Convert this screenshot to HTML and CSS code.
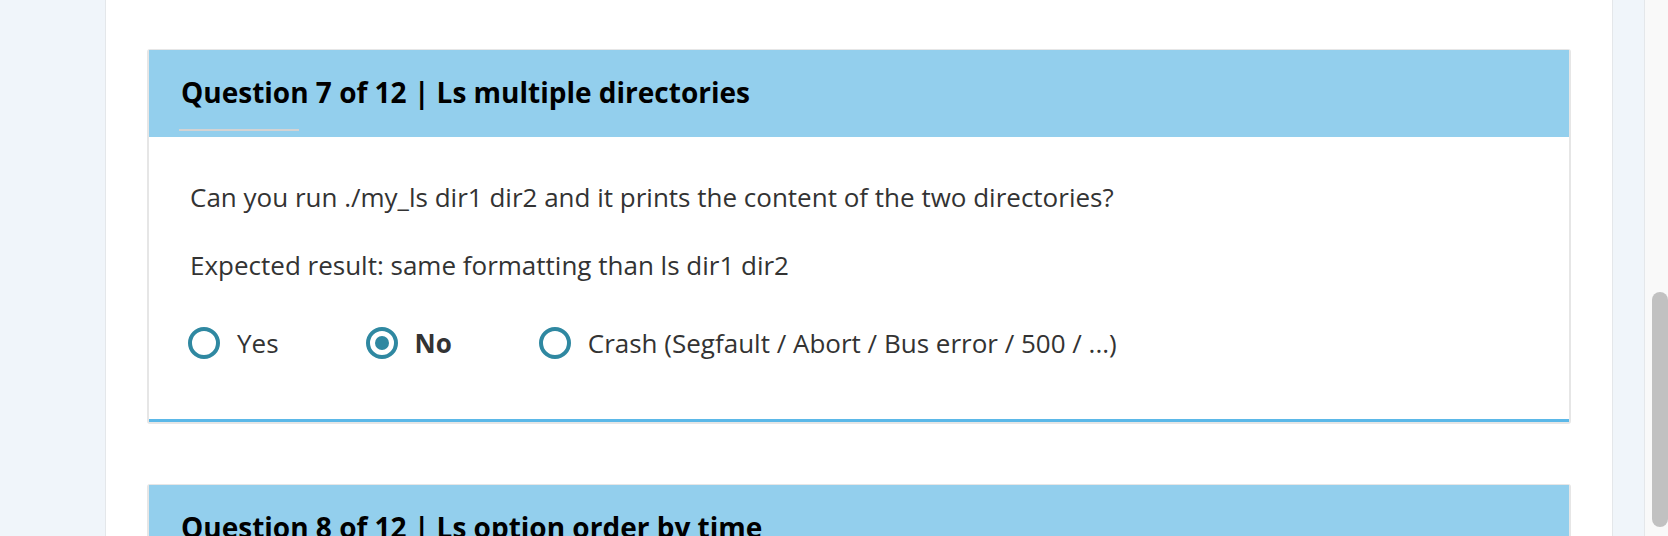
FILE: index.html
```html
<!DOCTYPE html>
<html lang="en">
<head>
<meta charset="utf-8">
<title>Evaluation</title>
<link rel="stylesheet" href="styles.css">
</head>
<body>
<div class="page">
  <aside class="side-left"></aside>
  <main class="main">
    <section class="card">
      <header class="card-head">
        <h2 class="card-title">Question 7 of 12 | Ls multiple directories</h2>
        <span class="title-rule"></span>
      </header>
      <div class="card-body">
        <p class="q-text">Can you run ./my_ls dir1 dir2 and it prints the content of the two directories?</p>
        <p class="q-text">Expected result: same formatting than ls dir1 dir2</p>
        <div class="options">
          <label class="option"><span class="radio"></span><span class="opt-label">Yes</span></label>
          <label class="option is-checked"><span class="radio"></span><span class="opt-label">No</span></label>
          <label class="option"><span class="radio"></span><span class="opt-label">Crash (Segfault / Abort / Bus error / 500 / ...)</span></label>
        </div>
      </div>
    </section>
    <section class="card">
      <header class="card-head">
        <h2 class="card-title">Question 8 of 12 | Ls option order by time</h2>
        <span class="title-rule"></span>
      </header>
    </section>
  </main>
  <aside class="side-right"></aside>
  <div class="scrollbar"><div class="thumb"></div></div>
</div>
</body>
</html>
```
FILE: styles.css
```css
html, body {
  margin: 0;
  padding: 0;
}
body {
  font-family: "Open Sans", "Noto Sans", sans-serif;
  color: #333;
  background: #fff;
}
.page {
  display: flex;
  height: 536px;
  overflow: hidden;
}
.side-left {
  width: 105px;
  flex: none;
  background: #f0f5fa;
  border-right: 1px solid #e4e7ea;
}
.main {
  flex: 1;
  background: #fff;
  padding: 49px 41px 0 41px;
  display: flex;
  flex-direction: column;
  gap: 60px;
}
.side-right {
  width: 31px;
  flex: none;
  background: #f0f5fa;
  border-left: 1px solid #e4e7ea;
  border-right: 1px solid #e4e7ea;
}
.scrollbar {
  width: 23px;
  flex: none;
  background: #f9f9f9;
  padding: 292px 0 0 7px;
  box-sizing: border-box;
}
.thumb {
  width: 16px;
  height: 235px;
  border-radius: 8px;
  background: #c1c1c1;
}
.card {
  flex: none;
  border: 2px solid #e6e6e6;
  border-top-width: 1px;
  border-radius: 3px;
  background: #fff;
}
.card-head {
  background: #93cfed;
  height: 87px;
  padding: 0 30px;
  box-sizing: border-box;
  display: flex;
  flex-direction: column;
  justify-content: flex-end;
}
.card-title {
  margin: 0 0 19px 2px;
  font-size: 28px;
  line-height: 36px;
  font-weight: 700;
  color: #000;
  white-space: nowrap;
}
.title-rule {
  display: block;
  width: 120px;
  height: 2px;
  background: #d3d3d3;
  margin-bottom: 6px;
  flex: none;
}
.card-body {
  padding: 42px 40px 58px 39px;
  border-bottom: 3px solid #5bb8e8;
}
.q-text {
  margin: 0 0 32px 2px;
  font-size: 26px;
  line-height: 36px;
}
.q-text + .q-text {
  margin-bottom: 42px;
}
.options {
  display: flex;
  align-items: center;
}
.option {
  display: flex;
  align-items: center;
  gap: 17px;
  margin-right: 87px;
  font-size: 26px;
  line-height: 36px;
}
.radio {
  width: 32px;
  height: 32px;
  flex: none;
  box-sizing: border-box;
  border: 4px solid #2f88a1;
  border-radius: 50%;
  display: flex;
  align-items: center;
  justify-content: center;
}
.is-checked .radio::after {
  content: "";
  width: 14px;
  height: 14px;
  border-radius: 50%;
  background: #2f88a1;
}
.is-checked .opt-label {
  font-weight: 700;
}
```
